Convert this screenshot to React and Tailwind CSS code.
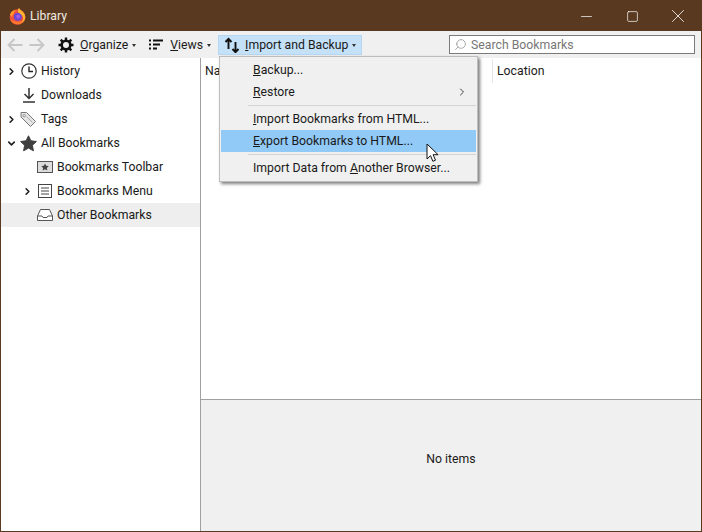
import React from "react";
import { ChevronRight, ChevronDown, Minus, Square, X, Search } from "lucide-react";

const FirefoxLogo = () => (
  <svg width="17" height="18" viewBox="0 0 17 18">
    <circle cx="8.500" cy="10" r="7.800" fill="#f0523a" />
    <path d="M1 12c1.500 4.500 6 6 9.800 5 3.400-1 5.700-4 5.700-7.500-1 3-3 5-6 5.300-3.500.3-6.500-.8-9.500-2.800z" fill="#fb7a2c" />
    <circle cx="8.800" cy="9.800" r="4" fill="#6b47d6" />
    <circle cx="9.200" cy="9.600" r="2.100" fill="#9a5be0" />
    <path d="M10 .8c.5 2 4.500 3.500 5.800 7 1 3-.3 6.500-3 8 1.600-2.300 1.700-4.800.7-6.700C12.300 7 10.300 6.300 9 5.200 8.700 3.500 9.200 2 10 .8z" fill="#ffb52e" />
    <path d="M1 7.500C2 4.800 4 3.300 6.800 3.300 5.300 4.500 5 5.500 5 6.500c-1.200.8-1.800 2-1.800 3.500-1-.6-1.900-1.500-2.200-2.500z" fill="#ff9a2e" />
  </svg>
);

const NavArrow = ({ flip }) => (
  <svg width="16" height="14" viewBox="0 0 16 14" className={flip ? "-scale-x-100" : ""}>
    <path d="M15.500 7H1.500M7.500 1L1.500 7l6 6" fill="none" stroke="#c6c6c6" strokeWidth="1.800" />
  </svg>
);

const GearIcon = () => (
  <svg width="16" height="16" viewBox="0 0 16 16" className="shrink-0">
    <circle cx="8" cy="8" r="4.300" fill="none" stroke="#111" strokeWidth="2.600" />
    <path d="M8 .5v3M8 12.500v3M.5 8h3M12.500 8h3M2.700 2.700l2.100 2.100M11.200 11.200l2.100 2.100M2.700 13.300l2.100-2.100M11.200 4.800l2.100-2.100" stroke="#111" strokeWidth="2.400" />
  </svg>
);

const ViewsIcon = () => (
  <svg width="14" height="11" viewBox="0 0 14 11" className="shrink-0">
    <path d="M0 1.500h2M4 1.500h10M0 5.500h2M4 5.500h7M0 9.500h2M4 9.500h4" stroke="#111" strokeWidth="1.800" />
  </svg>
);

const ImportIcon = () => (
  <svg width="16" height="16" viewBox="0 0 16 16" className="shrink-0">
    <path d="M4.500 12V2M1.500 5l3-3.200L7.500 5" fill="none" stroke="#111" strokeWidth="1.900" />
    <path d="M11.500 5v10M8.500 12l3 3.200 3-3.200" fill="none" stroke="#111" strokeWidth="1.900" />
  </svg>
);

const ClockIcon = () => (
  <svg width="16" height="16" viewBox="0 0 16 16">
    <circle cx="8" cy="8" r="7.200" fill="none" stroke="#333" strokeWidth="1.200" />
    <path d="M8 3.500V8.500H12" fill="none" stroke="#222" strokeWidth="1.400" />
  </svg>
);

const DownloadIcon = () => (
  <svg width="16" height="16" viewBox="0 0 16 16">
    <path d="M8 1v10M3.500 7L8 11.500 12.500 7" fill="none" stroke="#333" strokeWidth="1.500" />
    <path d="M2 15h12" stroke="#333" strokeWidth="1.500" />
  </svg>
);

const TagIcon = () => (
  <svg width="17" height="17" viewBox="0 0 17 17">
    <path d="M1 1.500h5.500l9 9-5 5-9.500-9.500z" fill="#e6e6e6" stroke="#777" strokeWidth="1" />
    <circle cx="4.200" cy="4.700" r="1.200" fill="#fff" stroke="#777" strokeWidth=".8" />
    <path d="M6.500 5.500l6 6" stroke="#aaa" strokeWidth="1" />
  </svg>
);

const StarIcon = () => (
  <svg width="17" height="17" viewBox="0 0 17 17">
    <path d="M8.500.8l2.400 5 5.500.7-4 3.800 1 5.500-4.900-2.700-4.900 2.700 1-5.500-4-3.800 5.500-.7z" fill="#3f3f3f" stroke="#3f3f3f" strokeLinejoin="round" />
  </svg>
);

const ToolbarIcon = () => (
  <svg width="16" height="14" viewBox="0 0 16 14">
    <rect x=".5" y="1.500" width="15" height="11" fill="#ddd" stroke="#555" />
    <path d="M8 3.500l1.200 2.300 2.500.3-1.800 1.800.4 2.500L8 9.300l-2.300 1.100.4-2.500-1.800-1.800 2.500-.3z" fill="#444" />
  </svg>
);

const MenuIcon = () => (
  <svg width="14" height="14" viewBox="0 0 14 14">
    <rect x=".5" y=".5" width="13" height="13" fill="#fff" stroke="#444" />
    <path d="M3 4h8M3 7h8M3 10h8" stroke="#444" />
  </svg>
);

const TrayIcon = () => (
  <svg width="16" height="14" viewBox="0 0 16 14">
    <path d="M3.500 1.500h9L15.500 8v4.500h-15V8z" fill="#fff" stroke="#555" />
    <path d="M.5 8h4.500l1 1.500h4L11 8h4.500" fill="none" stroke="#555" />
  </svg>
);

const Cursor = () => (
  <svg width="14" height="20" viewBox="0 0 14 20" className="absolute left-[425px] top-[142px]">
    <path d="M1 1v15l3.500-3.300 2.400 5.600 2.600-1.100-2.400-5.500h5z" fill="#fff" stroke="#111" strokeWidth="1" />
  </svg>
);

const TreeRow = ({ label, indent = "", arrow, icon, selected }) => (
  <div className={`flex h-6 items-center ${indent} ${selected ? "bg-[#eeeeee]" : ""}`}>
    <span className="flex w-[19px] shrink-0 items-center justify-center pl-0.5 pt-px">
      {arrow === "right" && <ChevronRight size={11} strokeWidth={3.5} className="text-[#222]" />}
      {arrow === "down" && <ChevronDown size={11} strokeWidth={3.5} className="text-[#222]" />}
    </span>
    <span className="flex w-[17px] shrink-0 justify-center">{icon}</span>
    <span className="ml-1 whitespace-nowrap">{label}</span>
  </div>
);

const MenuItem = ({ children, active, arrow }) => (
  <div className={`flex h-[22px] items-center justify-between pl-8 pr-2 ${active ? "bg-[#91c9f7]" : ""}`}>
    <span className="whitespace-nowrap">{children}</span>
    {arrow && <ChevronRight size={12} className="text-[#444]" />}
  </div>
);

const Caret = () => <span className="ml-1 mt-0.5 h-0 w-0 border-x-[2.500px] border-t-[3px] border-x-transparent border-t-[#333]" />;

export default function App() {
  return (
    <div className="relative flex h-[532px] w-[702px] flex-col overflow-hidden border border-[#59391f] bg-white font-['Roboto','Noto_Sans',sans-serif] text-[12.25px] text-[#1a1a1a]">
      <div className="flex h-[30px] shrink-0 items-center bg-[#59391f] pl-2 text-white">
        <FirefoxLogo />
        <span className="ml-1 text-[#f0e9e2]">Library</span>
        <div className="ml-auto flex items-center">
          <span className="flex h-[30px] w-[46px] items-center justify-center"><Minus size={17} strokeWidth={1} /></span>
          <span className="flex h-[30px] w-[46px] items-center justify-center"><Square size={13} strokeWidth={1.3} /></span>
          <span className="flex h-[30px] w-[46px] items-center justify-center"><X size={22} strokeWidth={0.9} /></span>
        </div>
      </div>

      <div className="flex h-[27px] shrink-0 items-center bg-[#f0f0f0] pl-1.5 pr-1.5">
        <NavArrow />
        <span className="ml-1.5"><NavArrow flip /></span>
        <span className="ml-[13px]"><GearIcon /></span>
        <span className="ml-1.5 pt-0.5"><u>O</u>rganize</span>
        <Caret />
        <span className="ml-[13px]"><ViewsIcon /></span>
        <span className="ml-[7px] pt-0.5"><u>V</u>iews</span>
        <Caret />
        <div className="ml-[7px] flex h-[20px] w-[144px] items-center border border-[#b5d7f3] bg-[#c5e1f8] pl-[5px]">
          <ImportIcon />
          <span className="ml-[5px] pt-0.5"><u>I</u>mport and Backup</span>
          <Caret />
        </div>
        <div className="ml-auto flex h-[19px] w-[246px] items-center border border-[#7a7a7a] bg-white pl-1 text-[#777]">
          <Search size={13} strokeWidth={1.3} className="-scale-x-100 text-[#888]" />
          <span className="ml-1 pt-0.5">Search Bookmarks</span>
        </div>
      </div>

      <div className="flex min-h-0 flex-1">
        <div className="w-[200px] shrink-0 border-r border-[#a0a0a0] pt-px">
          <TreeRow label="History" arrow="right" icon={<ClockIcon />} />
          <TreeRow label="Downloads" icon={<DownloadIcon />} />
          <TreeRow label="Tags" arrow="right" icon={<TagIcon />} />
          <TreeRow label="All Bookmarks" arrow="down" icon={<StarIcon />} />
          <TreeRow label="Bookmarks Toolbar" indent="pl-4" icon={<ToolbarIcon />} />
          <TreeRow label="Bookmarks Menu" indent="pl-4" arrow="right" icon={<MenuIcon />} />
          <TreeRow label="Other Bookmarks" indent="pl-4" icon={<TrayIcon />} selected />
        </div>
        <div className="flex min-w-0 flex-1 flex-col">
          <div className="flex-1 pt-px">
            <div className="flex h-6 items-center pl-1">
              <span>Name</span>
              <span className="ml-auto h-6 w-[209px] border-l border-[#e5e5e5] pl-1 leading-6">Location</span>
            </div>
          </div>
          <div className="flex h-[132px] shrink-0 items-center justify-center border-t border-[#a0a0a0] bg-[#f0f0f0] pb-3">
            No items
          </div>
        </div>
      </div>

      {/* open dropdown */}
      <div className="absolute left-[218px] top-[55px] w-[259px] border border-[#bdbdbd] bg-[#f0f0f0] px-px pb-0.5 pt-0.5 shadow-[2px_2px_3px_rgba(0,0,0,0.5)]">
        <MenuItem><u>B</u>ackup...</MenuItem>
        <MenuItem arrow><u>R</u>estore</MenuItem>
        <div className="my-0.5 ml-[27px] h-px bg-[#d4d4d4]" />
        <MenuItem><u>I</u>mport Bookmarks from HTML...</MenuItem>
        <MenuItem active><u>E</u>xport Bookmarks to HTML...</MenuItem>
        <div className="my-0.5 ml-[27px] h-px bg-[#d4d4d4]" />
        <MenuItem>Import Data from <u>A</u>nother Browser...</MenuItem>
      </div>
      <Cursor />
    </div>
  );
}
